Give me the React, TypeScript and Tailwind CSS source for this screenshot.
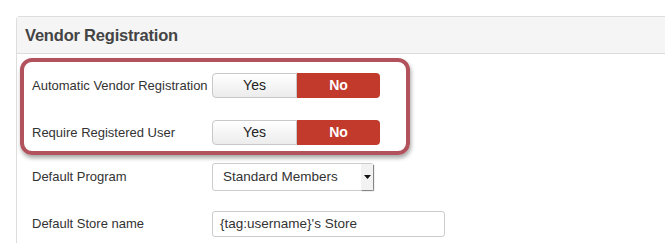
import React from 'react'

const font = { fontFamily: '"Liberation Sans", Arial, sans-serif' }

function Toggle() {
  return (
    <div className="flex h-[25px] w-[168px] text-[14px]">
      <div className="flex flex-1 items-center justify-center rounded-l-[4px] border border-[#c8c8c8] bg-gradient-to-b from-[#ffffff] to-[#ececec] text-[#222]">
        Yes
      </div>
      <div className="flex flex-1 items-center justify-center rounded-r-[4px] bg-[#c13a2b] font-bold text-white">
        No
      </div>
    </div>
  )
}

function Row({ label, children }: { label: string; children: React.ReactNode }) {
  return (
    <div className="flex items-center">
      <div className="w-[180px] shrink-0 text-[13px] text-[#333]">{label}</div>
      {children}
    </div>
  )
}

export default function App() {
  return (
    <div className="h-[243px] w-[665px] overflow-hidden bg-white pl-[16px] pt-[16px]" style={font}>
      <div className="h-[260px] rounded-tl-[4px] border border-r-0 border-[#dddddd]">
        <div className="flex h-[37px] items-center border-b border-[#dddddd] bg-[#f5f5f5] pl-[8px]">
          <h2 className="text-[16.5px] font-bold tracking-[-0.2px] text-[#444]">Vendor Registration</h2>
        </div>

        <div className="pl-[3px] pt-[4px]">
          {/* highlighted group */}
          <div className="flex h-[97px] w-[390px] flex-col gap-[22px] rounded-[12px] border-[4px] border-[#b1525c] pl-[8px] pt-[11px] shadow-[1px_3px_4px_rgba(0,0,0,0.35)]">
            <Row label="Automatic Vendor Registration">
              <Toggle />
            </Row>
            <Row label="Require Registered User">
              <Toggle />
            </Row>
          </div>

          <div className="flex flex-col gap-[20px] pl-[12px] pt-[8px]">
            <Row label="Default Program">
              <div className="flex h-[28px] w-[162px] items-center justify-between rounded-[3px] border border-[#cccccc] bg-white pl-[10px] text-[13.5px] text-[#333]">
                <span>Standard Members</span>
                <span className="flex h-full w-[12px] items-center justify-center bg-[#f2f2f2] shadow-[1px_1px_1px_rgba(0,0,0,0.35)]">
                  <svg width="7" height="4" viewBox="0 0 7 4" aria-hidden>
                    <path d="M0 0h7L3.5 4z" fill="#111" />
                  </svg>
                </span>
              </div>
            </Row>
            <Row label="Default Store name">
              <div className="flex h-[26px] w-[233px] items-center rounded-[3px] border border-[#cccccc] bg-white pl-[7px] text-[13.5px] text-[#333]">
                {"{tag:username}'s Store"}
              </div>
            </Row>
          </div>
        </div>
      </div>
    </div>
  )
}
